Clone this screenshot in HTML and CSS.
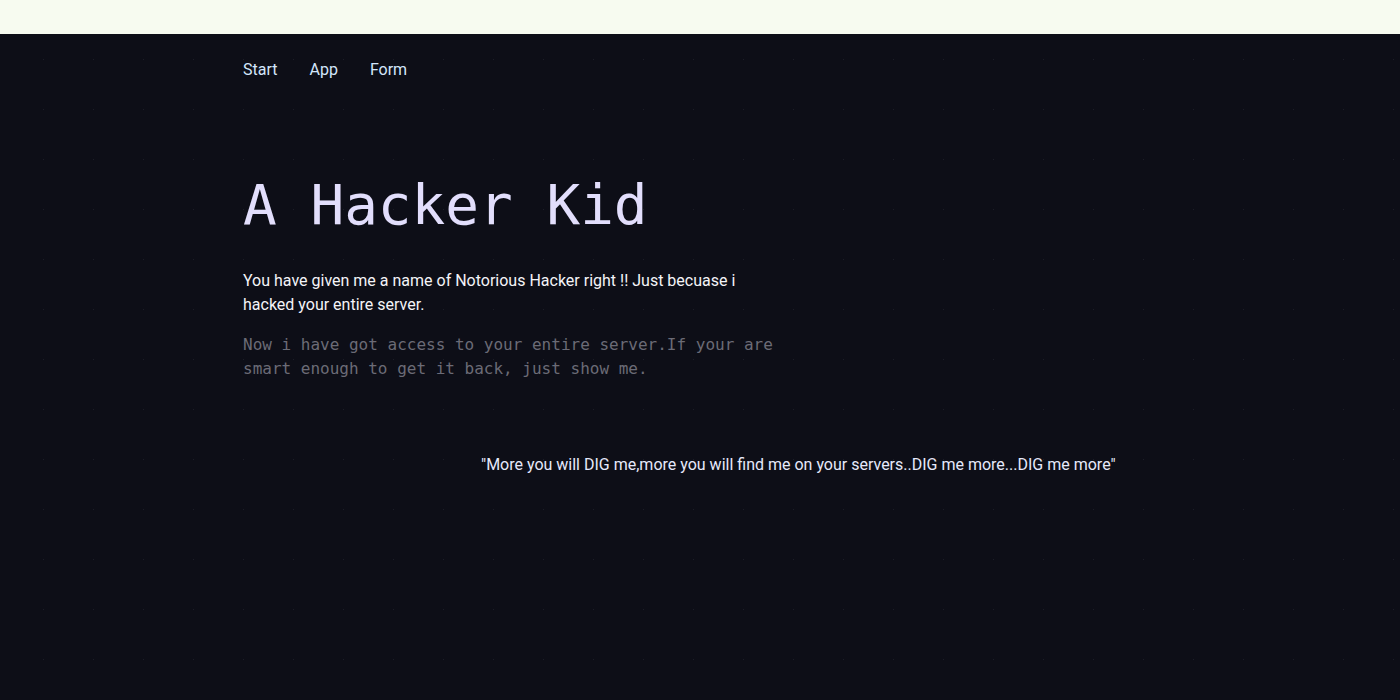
FILE: index.html
```html
<!DOCTYPE html>
<html lang="en">
<head>
<meta charset="utf-8">
<title>A Hacker Kid</title>
<link rel="stylesheet" href="styles.css">
</head>
<body>
<div class="topbar"></div>
<main class="page">
  <div class="container">
    <nav class="nav">
      <a href="#" class="nav-link">Start</a>
      <a href="#" class="nav-link">App</a>
      <a href="#" class="nav-link">Form</a>
    </nav>
    <section class="hero">
      <h1 class="title">A Hacker Kid</h1>
      <p class="lead">You have given me a name of Notorious Hacker right !! Just becuase i hacked your entire server.</p>
      <p class="mono">Now i have got access to your entire server.If your are smart enough to get it back, just show me.</p>
    </section>
    <p class="quote">"More you will DIG me,more you will find me on your servers..DIG me more...DIG me more"</p>
  </div>
</main>
</body>
</html>
```
FILE: styles.css
```css
html, body {
  margin: 0;
  padding: 0;
}
body {
  font-family: Roboto, "Liberation Sans", sans-serif;
  font-size: 16px;
  line-height: 24px;
  background: #0d0e17;
}
.topbar {
  height: 34px;
  background: #f7fbf0;
}
.page {
  min-height: 666px;
  background-color: #0d0e17;
  background-image: conic-gradient(from 270deg at 1px 1px, #1d1e28 90deg, transparent 0);
  background-size: 50px 50px;
  background-position: 43px 25px;
}
.container {
  padding: 24px 243px 0;
}
.nav {
  display: flex;
  gap: 32px;
}
.nav-link {
  color: #d3e6fb;
  text-decoration: none;
}
.hero {
  margin-top: 87px;
  max-width: 540px;
}
.title {
  margin: 0;
  font-family: "DejaVu Sans Mono", monospace;
  font-weight: normal;
  font-size: 56px;
  line-height: 72px;
  color: #e2defc;
}
.lead {
  margin: 28px 0 0;
  color: #f4f4f8;
}
.mono {
  margin: 16px 0 0;
  font-family: "DejaVu Sans Mono", monospace;
  color: #6b6b76;
}
.quote {
  margin: 72px 0 0;
  padding-left: 238px;
  color: #e6e9fb;
}
```
